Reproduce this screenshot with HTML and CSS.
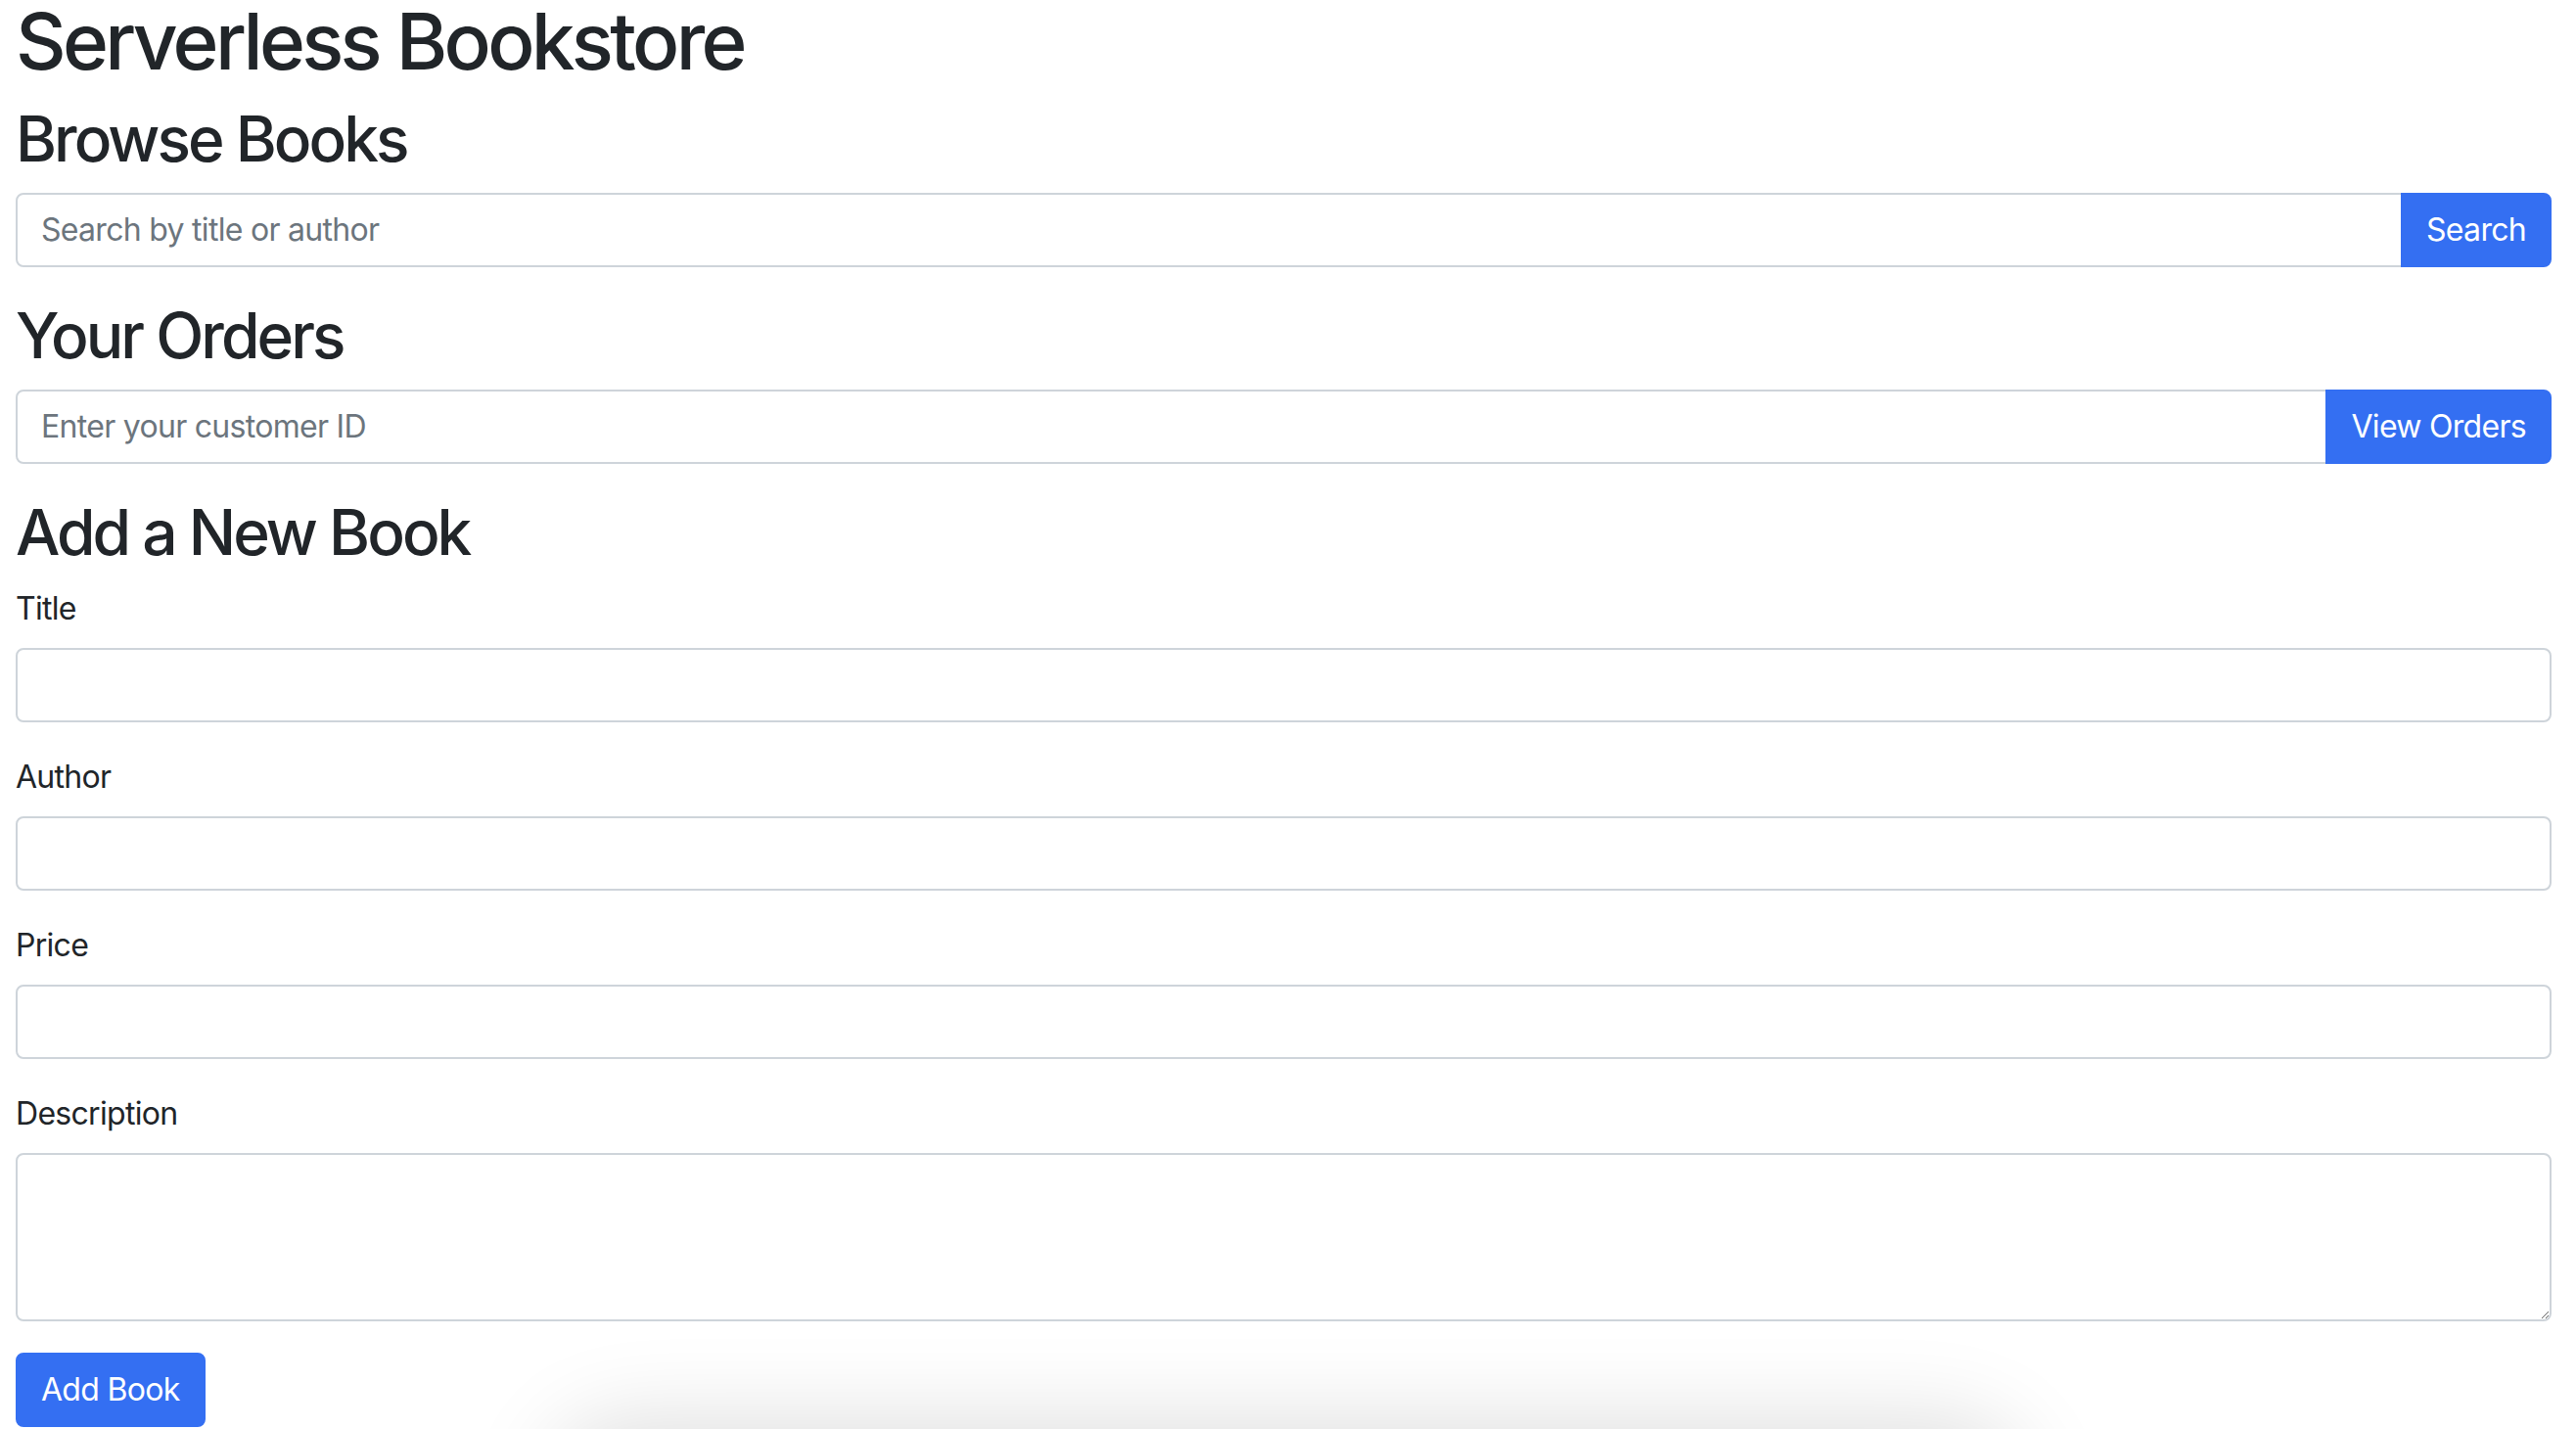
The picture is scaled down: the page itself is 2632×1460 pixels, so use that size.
FILE: index.html
```html
<!DOCTYPE html>
<html lang="en">
<head>
<meta charset="utf-8">
<title>Serverless Bookstore</title>
<link rel="stylesheet" href="styles.css">
</head>
<body>
<div class="page">
  <h1 class="title">Serverless Bookstore</h1>

  <h2 class="section">Browse Books</h2>
  <div class="input-group">
    <input class="form-control" type="text" placeholder="Search by title or author">
    <button class="btn" type="button">Search</button>
  </div>

  <h2 class="section">Your Orders</h2>
  <div class="input-group">
    <input class="form-control" type="text" placeholder="Enter your customer ID">
    <button class="btn" type="button">View Orders</button>
  </div>

  <h2 class="section">Add a New Book</h2>
  <form class="book-form">
    <div class="field">
      <label class="form-label" for="title">Title</label>
      <input class="form-control" id="title" type="text">
    </div>
    <div class="field">
      <label class="form-label" for="author">Author</label>
      <input class="form-control" id="author" type="text">
    </div>
    <div class="field">
      <label class="form-label" for="price">Price</label>
      <input class="form-control" id="price" type="number">
    </div>
    <div class="field">
      <label class="form-label" for="description">Description</label>
      <textarea class="form-control area" id="description" rows="3"></textarea>
    </div>
    <button class="btn" type="submit">Add Book</button>
  </form>
</div>
<div class="floating-shadow"></div>
</body>
</html>
```

FILE: styles.css
```css
html, body {
  overflow: hidden;
}
body {
  margin: 0;
  padding: 0 25px 0 16px;
  background: #fff;
  color: #212529;
  font-family: Inter, "Noto Sans", sans-serif;
  font-size: 32px;
  line-height: 1.5;
  letter-spacing: -0.022em;
}
.title {
  font-size: 80px;
  font-weight: 550;
  line-height: 80px;
  letter-spacing: -0.046em;
  padding-top: 2px;
  margin: 0 0 22px;
}
.section {
  font-size: 64px;
  font-weight: 550;
  line-height: 1.2;
  letter-spacing: -0.046em;
  margin: 0 0 16px;
}
.input-group {
  display: flex;
  margin-bottom: 32px;
}
.form-control {
  display: block;
  width: 100%;
  box-sizing: border-box;
  height: 76px;
  padding: 12px 24px;
  font: inherit;
  line-height: 1.5;
  letter-spacing: -0.022em;
  color: #212529;
  background: #fff;
  border: 2px solid #ced4da;
  border-radius: 8px;
  outline: none;
  margin: 0;
}
.form-control::placeholder {
  color: #6c757d;
  opacity: 1;
}
.input-group .form-control {
  flex: 1 1 auto;
  width: 1%;
  min-width: 0;
  border-radius: 8px 0 0 8px;
}
.area {
  height: 172px;
  resize: vertical;
}
.btn {
  display: inline-block;
  box-sizing: border-box;
  height: 76px;
  padding: 12px 24px;
  font: inherit;
  line-height: 1.5;
  letter-spacing: -0.022em;
  color: #fff;
  background: #346ff2;
  border: 2px solid #346ff2;
  border-radius: 8px;
  margin: 0;
  white-space: nowrap;
}
.input-group .btn {
  border-radius: 0 8px 8px 0;
  margin-left: -2px;
}
.form-label {
  display: block;
  margin-bottom: 16px;
}
.field {
  margin-bottom: 32px;
}
.book-form {
  margin: 0;
}
.floating-shadow {
  position: fixed;
  left: 600px;
  width: 1430px;
  top: 1490px;
  height: 120px;
  border-radius: 40px;
  background: #fff;
  box-shadow: 0 0 90px 40px rgba(0, 0, 0, 0.13);
}
```
